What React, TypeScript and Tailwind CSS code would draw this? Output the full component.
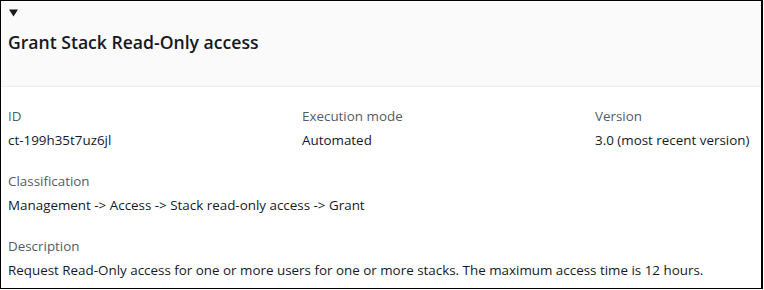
import React from "react";

// Detail panel for a change type: collapsible header + key/value grid.

const FONT = { fontFamily: '"Open Sans", "Noto Sans", Arial, sans-serif' };

function Field({ label, value }: { label: string; value: string }) {
  return (
    <div className="flex flex-col gap-[4px]">
      <span className="text-[13.4px] leading-[20px] text-[#545b64]">{label}</span>
      <span className="text-[13.4px] leading-[20px] text-[#16191f]">{value}</span>
    </div>
  );
}

export default function App() {
  return (
    <div className="w-[764px] h-[290px] bg-white" style={FONT}>
      <div className="h-[289px] w-[763px] border border-black border-r-2 flex flex-col">
        {/* Header */}
        <div className="h-[86px] bg-[#fafafa] border-b border-[#eaeded] px-[7px] pt-[8px]">
          <svg width="9" height="8" viewBox="0 0 9 8" className="block ml-[1px]">
            <path d="M0 0.5 H9 L4.5 7.5 Z" fill="#16191f" />
          </svg>
          <h2 className="mt-[13px] text-[17.6px] leading-[24px] font-semibold text-[#16191f]">
            Grant Stack Read-Only access
          </h2>
        </div>

        {/* Body */}
        <div className="px-[7px] pt-[19px] flex flex-col gap-[21px]">
          <div className="grid grid-cols-[294px_293px_1fr]">
            <Field label="ID" value="ct-199h35t7uz6jl" />
            <Field label="Execution mode" value="Automated" />
            <Field label="Version" value="3.0 (most recent version)" />
          </div>
          <Field label="Classification" value="Management -> Access -> Stack read-only access -> Grant" />
          <Field
            label="Description"
            value="Request Read-Only access for one or more users for one or more stacks. The maximum access time is 12 hours."
          />
        </div>
      </div>
    </div>
  );
}
